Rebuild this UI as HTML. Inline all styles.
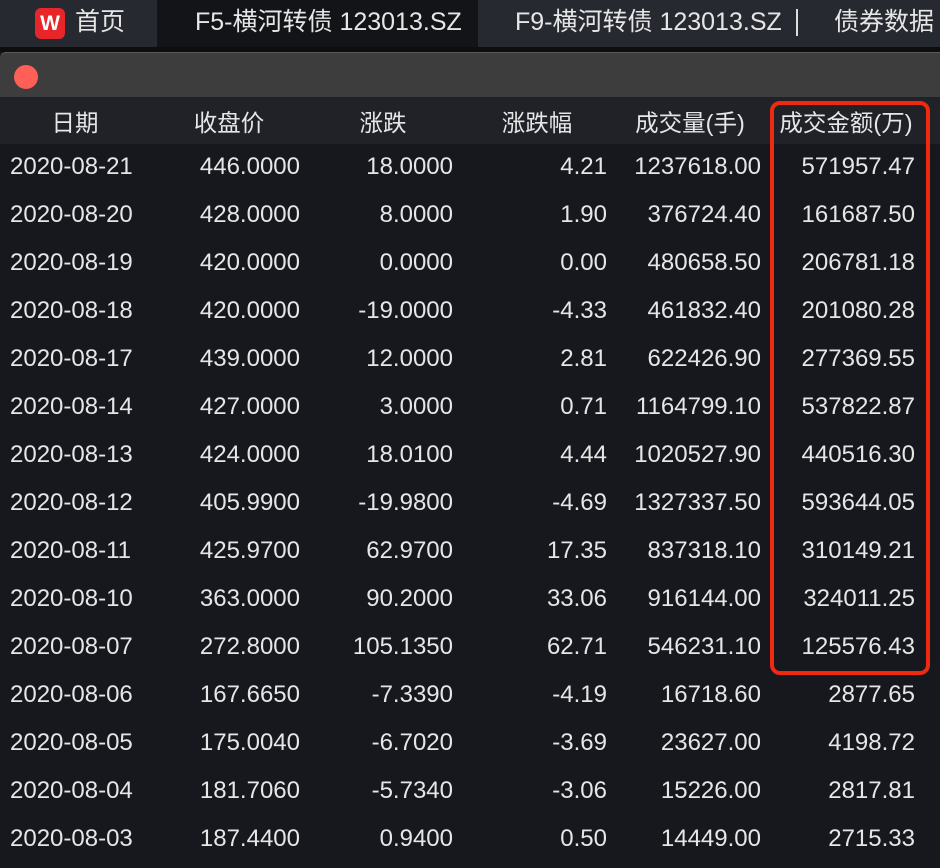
<!DOCTYPE html>
<html><head><meta charset="utf-8"><style>
body{margin:0;width:940px;height:868px;background:#16181d;overflow:hidden;font-family:"Liberation Sans","Noto Sans CJK SC",sans-serif;color:#e6e6e6;position:relative}
.tabs{position:absolute;left:0;top:0;width:940px;height:47px;background:#262930;font-size:25px}
.tab{position:absolute;top:0;height:47px;line-height:45px;white-space:nowrap}
.gap{position:absolute;left:0;top:47px;width:940px;height:5px;background:#0c0d0f}
.title{position:absolute;left:0;top:52px;width:940px;height:45px;background:#3d3d3d;border-top:1px solid #5a5a5a;border-radius:6px 0 0 0}
.dot{position:absolute;left:14px;top:12px;width:24px;height:24px;border-radius:50%;background:#fe5f57}
.hdr{position:absolute;left:0;top:97px;width:940px;height:47px;background:#202228;font-size:23.5px}
.hdr span{position:absolute;top:0;line-height:52px;transform:translateX(-50%);white-space:nowrap}
.row{position:absolute;left:0;width:940px;height:48px;font-size:24px}
.row span{position:absolute;line-height:46px;white-space:nowrap}
.box{position:absolute;left:770px;top:101px;width:152px;height:566px;border:4px solid #f02a10;border-radius:10px}
</style></head><body>
<div class="tabs">
<div style="position:absolute;left:157px;top:0;width:321px;height:47px;background:#131417"></div>
<div style="position:absolute;left:35px;top:8px;width:30px;height:31px;border-radius:6px;background:#e8262a;color:#fff;font-weight:bold;font-size:21px;line-height:31px;text-align:center">W</div>
<div class="tab" style="left:75px">首页</div>
<div class="tab" style="left:195px">F5-横河转债 123013.SZ</div>
<div class="tab" style="left:515px">F9-横河转债 123013.SZ</div>
<div style="position:absolute;left:796px;top:9px;width:2px;height:27px;background:#ddd"></div>
<div class="tab" style="left:834px">债券数据</div>
</div>
<div class="gap"></div>
<div class="title"><div class="dot"></div></div>
<div class="hdr">
<span style="left:75px">日期</span><span style="left:229px">收盘价</span><span style="left:383px">涨跌</span><span style="left:537px">涨跌幅</span><span style="left:690px">成交量(手)</span><span style="left:846px">成交金额(万)</span>
</div>
<div id="rows"></div>
<div class="box"></div>
<script>
var d=[["2020-08-21","446.0000","18.0000","4.21","1237618.00","571957.47"],
["2020-08-20","428.0000","8.0000","1.90","376724.40","161687.50"],
["2020-08-19","420.0000","0.0000","0.00","480658.50","206781.18"],
["2020-08-18","420.0000","-19.0000","-4.33","461832.40","201080.28"],
["2020-08-17","439.0000","12.0000","2.81","622426.90","277369.55"],
["2020-08-14","427.0000","3.0000","0.71","1164799.10","537822.87"],
["2020-08-13","424.0000","18.0100","4.44","1020527.90","440516.30"],
["2020-08-12","405.9900","-19.9800","-4.69","1327337.50","593644.05"],
["2020-08-11","425.9700","62.9700","17.35","837318.10","310149.21"],
["2020-08-10","363.0000","90.2000","33.06","916144.00","324011.25"],
["2020-08-07","272.8000","105.1350","62.71","546231.10","125576.43"],
["2020-08-06","167.6650","-7.3390","-4.19","16718.60","2877.65"],
["2020-08-05","175.0040","-6.7020","-3.69","23627.00","4198.72"],
["2020-08-04","181.7060","-5.7340","-3.06","15226.00","2817.81"],
["2020-08-03","187.4400","0.9400","0.50","14449.00","2715.33"]];
var r=[null,940-300,940-453,940-607,940-761,940-915],h="";
d.forEach(function(x,i){h+='<div class="row" style="top:'+(144+48*i)+'px"><span style="left:10px">'+x[0]+'</span>';
for(var j=1;j<6;j++)h+='<span style="right:'+r[j]+'px">'+x[j]+'</span>';h+='</div>';});
document.getElementById('rows').innerHTML=h;
</script>
</body></html>
